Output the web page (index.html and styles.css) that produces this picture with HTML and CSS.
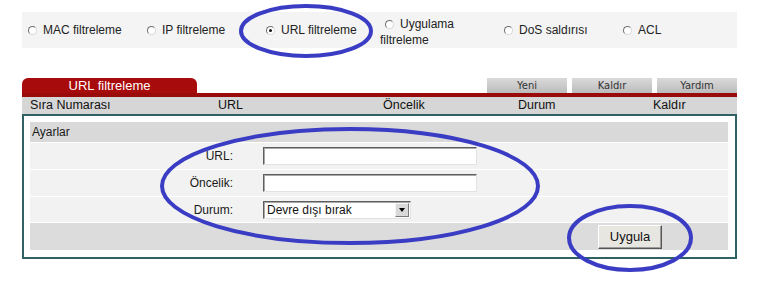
FILE: index.html
```html
<!DOCTYPE html>
<html lang="tr">
<head>
<meta charset="utf-8">
<title>URL filtreleme</title>
<link rel="stylesheet" href="styles.css">
</head>
<body>
<div class="page">
  <div class="filters">
    <label class="opt"><span class="radio"></span>MAC filtreleme</label>
    <label class="opt"><span class="radio"></span>IP filtreleme</label>
    <label class="opt"><span class="radio checked"></span>URL filtreleme</label>
    <label class="opt opt-wrap"><span class="radio"></span>Uygulama filtreleme</label>
    <label class="opt"><span class="radio"></span>DoS saldırısı</label>
    <label class="opt"><span class="radio"></span>ACL</label>
  </div>

  <div class="tabbar">
    <div class="tab">URL filtreleme</div>
    <div class="actions">
      <span class="tbtn">Yeni</span>
      <span class="tbtn">Kaldır</span>
      <span class="tbtn">Yardım</span>
    </div>
  </div>

  <div class="thead">
    <span>Sıra Numarası</span>
    <span>URL</span>
    <span>Öncelik</span>
    <span>Durum</span>
    <span>Kaldır</span>
  </div>

  <div class="box">
    <div class="settings">
      <div class="shead">Ayarlar</div>
      <div class="field">
        <span class="flabel">URL:</span>
        <input class="text-input" type="text">
      </div>
      <div class="field">
        <span class="flabel">Öncelik:</span>
        <input class="text-input" type="text">
      </div>
      <div class="field">
        <span class="flabel">Durum:</span>
        <div class="select">
          <span class="select-value">Devre dışı bırak</span>
          <span class="select-arrow"><span class="tri"></span></span>
        </div>
      </div>
      <div class="apply-row">
        <button class="apply" type="button">Uygula</button>
      </div>
    </div>
  </div>
</div>

<svg class="marks" width="774" height="285" viewBox="0 0 774 285">
  <ellipse cx="306" cy="31" rx="65" ry="25" />
  <ellipse cx="350" cy="186" rx="188" ry="57" />
  <ellipse cx="630" cy="238" rx="61" ry="32" />
</svg>
</body>
</html>
```

FILE: styles.css
```css
html, body {
  margin: 0;
  padding: 0;
  background: #ffffff;
}

body {
  position: relative;
  width: 774px;
  height: 285px;
  overflow: hidden;
  font-family: "Liberation Sans", Arial, sans-serif;
  color: #1a1a1a;
}

.page {
  width: 715px;
  margin-left: 22px;
  padding-top: 12px;
}

/* radio filter bar */
.filters {
  display: grid;
  grid-template-columns: repeat(6, 119px);
  height: 36px;
  align-items: center;
  background: #f4f4f4;
  font-size: 12px;
  line-height: 16px;
  color: #222;
}

.opt {
  padding-left: 1px;
}

.opt-wrap {
  padding-top: 3px;
}

.radio {
  position: relative;
  display: inline-block;
  width: 7px;
  height: 7px;
  margin: 0 6px 0 5px;
  vertical-align: -1px;
  border: 1px solid;
  border-color: #6f6f6f #d8d8d8 #d8d8d8 #6f6f6f;
  border-radius: 50%;
  background: #ffffff;
}

.radio.checked::after {
  content: "";
  position: absolute;
  left: 2px;
  top: 2px;
  width: 3px;
  height: 3px;
  border-radius: 50%;
  background: #111;
}

/* tab bar */
.tabbar {
  display: flex;
  align-items: flex-start;
  height: 15px;
  margin-top: 30px;
  border-bottom: 4px solid #990a0a;
}

.tab {
  width: 175px;
  height: 15px;
  background: #a80b0b;
  color: #ffffff;
  border-radius: 6px 6px 0 0;
  text-align: center;
  font-size: 13px;
  line-height: 15px;
}

.actions {
  display: flex;
  gap: 5px;
  margin-left: auto;
}

.tbtn {
  width: 80px;
  height: 15px;
  background: linear-gradient(#dadada, #bcbcbc);
  color: #333;
  font-family: "DejaVu Sans", Verdana, sans-serif;
  font-size: 10px;
  line-height: 15px;
  text-align: center;
}

/* list header */
.thead {
  display: grid;
  grid-template-columns: 188px 165px 135px 135px 1fr;
  height: 17px;
  padding-left: 8px;
  background: #d6d6d6;
  font-size: 12.5px;
  line-height: 17px;
  color: #111;
}

/* settings box */
.box {
  border: 2px solid #2f6262;
  padding: 6px 7px 7px 6px;
}

.settings {
  display: grid;
  grid-template-rows: 20px 26px 26px 25px 27px;
  row-gap: 1px;
  background: #ffffff;
  font-size: 12px;
}

.shead {
  background: #d9d9d9;
  padding-left: 2px;
  line-height: 20px;
}

.field {
  display: grid;
  grid-template-columns: 203px 1fr;
  column-gap: 30px;
  align-items: center;
  background: #f2f2f2;
}

.flabel {
  text-align: right;
}

.text-input {
  width: 214px;
  height: 18px;
  box-sizing: border-box;
  margin: 0;
  padding: 0;
  border: 1px solid;
  border-color: #5e5e5e #e2e2e2 #e2e2e2 #5e5e5e;
  box-shadow: inset 1px 1px 0 #a8a8a8;
  background: #ffffff;
  outline: none;
}

.select {
  display: flex;
  width: 148px;
  height: 18px;
  box-sizing: border-box;
  border: 1px solid;
  border-color: #5e5e5e #e2e2e2 #e2e2e2 #5e5e5e;
  box-shadow: inset 1px 1px 0 #a8a8a8;
  background: #ffffff;
}

.select-value {
  flex: 1;
  padding-left: 3px;
  line-height: 16px;
  font-size: 12px;
  color: #111;
}

.select-arrow {
  display: flex;
  align-items: center;
  justify-content: center;
  width: 14px;
  margin: 1px 1px 1px 0;
  box-sizing: border-box;
  background: #d9d9d9;
  border: 1px solid;
  border-color: #f4f4f4 #7a7a7a #7a7a7a #f4f4f4;
}

.tri {
  width: 0;
  height: 0;
  border-left: 3.5px solid transparent;
  border-right: 3.5px solid transparent;
  border-top: 4px solid #000;
}

.apply-row {
  display: flex;
  align-items: center;
  justify-content: flex-end;
  padding-right: 66px;
  background: #dcdcdc;
}

.apply {
  width: 64px;
  height: 24px;
  margin: 0;
  padding: 0;
  box-sizing: border-box;
  border: 1px solid;
  border-color: #ffffff #555555 #555555 #ffffff;
  box-shadow: inset -1px -1px 0 #9c9c9c;
  background: #e8e6e1;
  font-family: "Liberation Sans", Arial, sans-serif;
  font-size: 13px;
  color: #111;
}

/* hand-drawn annotation overlay */
.marks {
  position: absolute;
  left: 0;
  top: 0;
  pointer-events: none;
}

.marks ellipse {
  fill: none;
  stroke: #3a3dc4;
  stroke-width: 4;
}
```
